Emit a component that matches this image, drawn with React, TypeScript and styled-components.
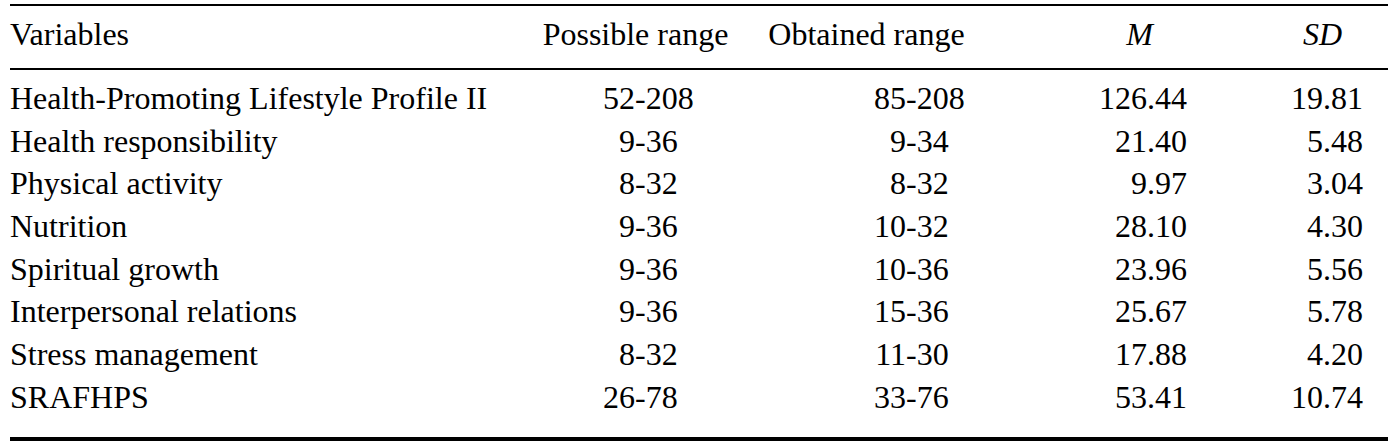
import React from "react";
import styled, { createGlobalStyle } from "styled-components";

const GlobalStyle = createGlobalStyle`
  html, body {
    margin: 0;
    padding: 0;
    background: #ffffff;
  }
  body {
    font-family: "Liberation Serif", "Times New Roman", serif;
    color: #000000;
  }
`;

// Column layout shared by header and body rows
const COLUMNS = "520px 211px 251px 196px 200px";

const Table = styled.div`
  margin: 4px 0 0 10px;
  width: 1378px;
  font-size: 32px;
  border-bottom: 4px solid #000;
`;

const HeaderRow = styled.div`
  display: grid;
  grid-template-columns: ${COLUMNS};
  height: 62px;
  border-top: 2px solid #000;
  border-bottom: 2px solid #000;
  line-height: 56px;
`;

const HeaderCell = styled.div<{ $align?: string; $padRight?: number; $italic?: boolean }>`
  text-align: ${(p) => p.$align || "left"};
  padding-right: ${(p) => p.$padRight || 0}px;
  font-style: ${(p) => (p.$italic ? "italic" : "normal")};
  white-space: nowrap;
`;

const Body = styled.div`
  padding: 7px 0 18px 0;
`;

const Row = styled.div`
  display: grid;
  grid-template-columns: ${COLUMNS};
  line-height: 42.7px;
  height: 42.7px;
`;

const NameCell = styled.div`
  white-space: nowrap;
`;

const RangeCell = styled.div`
  display: flex;
  white-space: nowrap;
`;

const RangeLow = styled.span<{ $width: number }>`
  display: inline-block;
  width: ${(p) => p.$width}px;
  text-align: right;
`;

const NumberCell = styled.div<{ $padRight: number }>`
  text-align: right;
  padding-right: ${(p) => p.$padRight}px;
  white-space: nowrap;
`;

interface LifestyleRow {
  name: string;
  possible: [string, string];
  obtained: [string, string];
  mean: string;
  sd: string;
}

const rows: Array<LifestyleRow> = [
  { name: "Health-Promoting Lifestyle Profile II", possible: ["52", "208"], obtained: ["85", "208"], mean: "126.44", sd: "19.81" },
  { name: "Health responsibility", possible: ["9", "36"], obtained: ["9", "34"], mean: "21.40", sd: "5.48" },
  { name: "Physical activity", possible: ["8", "32"], obtained: ["8", "32"], mean: "9.97", sd: "3.04" },
  { name: "Nutrition", possible: ["9", "36"], obtained: ["10", "32"], mean: "28.10", sd: "4.30" },
  { name: "Spiritual growth", possible: ["9", "36"], obtained: ["10", "36"], mean: "23.96", sd: "5.56" },
  { name: "Interpersonal relations", possible: ["9", "36"], obtained: ["15", "36"], mean: "25.67", sd: "5.78" },
  { name: "Stress management", possible: ["8", "32"], obtained: ["11", "30"], mean: "17.88", sd: "4.20" },
  { name: "SRAFHPS", possible: ["26", "78"], obtained: ["33", "76"], mean: "53.41", sd: "10.74" },
];

const Range = ({ value, lowWidth }: { value: [string, string]; lowWidth: number }) => (
  <RangeCell>
    <RangeLow $width={lowWidth}>{value[0]}</RangeLow>
    <span>-{value[1]}</span>
  </RangeCell>
);

export default function App() {
  return (
    <>
      <GlobalStyle />
      <Table>
        <HeaderRow>
          <HeaderCell>Variables</HeaderCell>
          <HeaderCell $align="center">Possible range</HeaderCell>
          <HeaderCell $align="center">Obtained range</HeaderCell>
          <HeaderCell $align="right" $padRight={35} $italic>M</HeaderCell>
          <HeaderCell $align="right" $padRight={46} $italic>SD</HeaderCell>
        </HeaderRow>
        <Body>
          {rows.map((row) => (
            <Row key={row.name}>
              <NameCell>{row.name}</NameCell>
              <Range value={row.possible} lowWidth={105} />
              <Range value={row.obtained} lowWidth={165} />
              <NumberCell $padRight={1}>{row.mean}</NumberCell>
              <NumberCell $padRight={25}>{row.sd}</NumberCell>
            </Row>
          ))}
        </Body>
      </Table>
    </>
  );
}
